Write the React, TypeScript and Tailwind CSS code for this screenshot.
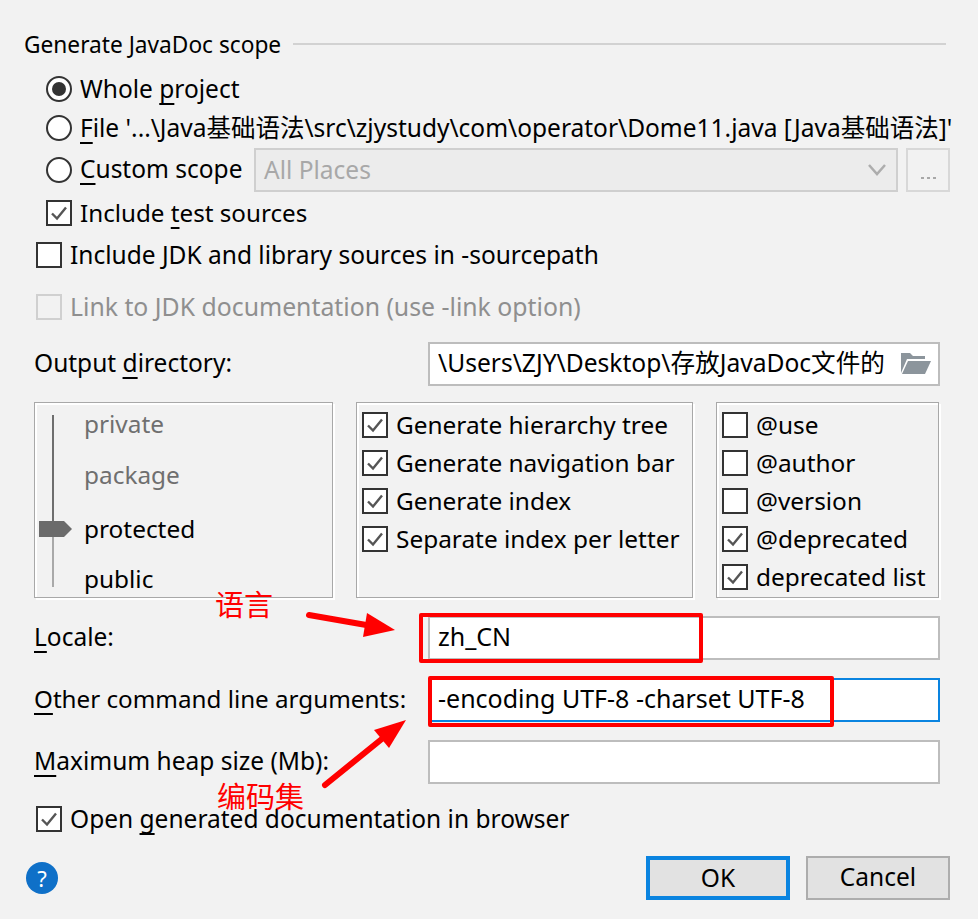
import type { ReactNode } from 'react';

const u = 'underline decoration-2 underline-offset-[5px] [text-decoration-skip-ink:none]';

function Check({ on, disabled }: { on?: boolean; disabled?: boolean }) {
	return (
		<span
			className={`flex h-[26px] w-[26px] shrink-0 items-center justify-center border-2 ${
				disabled ? 'border-[#d0d0d0] bg-[#f2f2f2]' : 'border-[#333333] bg-white'
			}`}
		>
			{on && (
				<svg width="18" height="18" viewBox="0 0 18 18" fill="none">
					<path d="M2 9.5 L7 14.5 L16 3.5" stroke="#555555" strokeWidth="2.4" />
				</svg>
			)}
		</span>
	);
}

function Radio({ on }: { on?: boolean }) {
	return (
		<span className="flex h-[26px] w-[26px] shrink-0 items-center justify-center rounded-full border-2 border-[#333333] bg-white">
			{on && <span className="h-[14px] w-[14px] rounded-full bg-[#333333]" />}
		</span>
	);
}

function Row({ h, pl, children }: { h: string; pl: string; children: ReactNode }) {
	return <div className={`flex items-center gap-[8px] ${h} ${pl}`}>{children}</div>;
}

function CheckItem({ on, label }: { on?: boolean; label: string }) {
	return (
		<div className="flex h-[38px] items-center gap-[8px]">
			<Check on={on} />
			<span className="text-[24.4px]">{label}</span>
		</div>
	);
}

function Field({ label, border, children }: { label: ReactNode; border?: string; children?: ReactNode }) {
	return (
		<div className="flex h-[44px] items-center justify-between pl-[34px] pr-[38px]">
			<span className="pb-[2px]">{label}</span>
			<div className={`flex h-[44px] w-[512px] items-center border-2 bg-white pb-[2px] pl-[8px] text-[25px] ${border ?? 'border-[#bdbdbd]'}`}>
				{children}
			</div>
		</div>
	);
}

function Slider() {
	return (
		<svg width="36" height="192" viewBox="0 0 36 192" className="shrink-0">
			<rect x="15" y="11" width="2" height="108" fill="#6e6e6e" />
			<rect x="15" y="119" width="2" height="64" fill="#a9a9a9" />
			<path d="M2 117 H27 L35 125 L27 133 H2 Z" fill="#6b6b6b" />
		</svg>
	);
}

export default function App() {
	return (
		<div
			className="relative h-[919px] w-full overflow-hidden bg-[#f2f2f2] pt-[24px] text-[24.5px] text-black"
			style={{ fontFamily: '"Noto Sans", "Noto Sans CJK SC", sans-serif' }}
		>
			<div className="flex h-[44px] items-center gap-[12px] pb-[2px] pl-[24px] pr-[32px] text-[22.7px]">
				<span>Generate JavaDoc scope</span>
				<div className="mb-[2px] h-[2px] flex-1 bg-[#d2d2d2]" />
			</div>

			<Row h="h-[42px]" pl="pl-[46px]">
				<Radio on />
				<span>Whole <span className={u}>p</span>roject</span>
			</Row>
			<Row h="h-[36px]" pl="pl-[46px]">
				<Radio />
				<span className="whitespace-nowrap">
					<span className={u}>F</span>ile '...\Java基础语法\src\zjystudy\com\operator\Dome11.java [Java基础语法]'
				</span>
			</Row>
			<Row h="h-[48px]" pl="pl-[46px]">
				<Radio />
				<span className="w-[168px] whitespace-nowrap pb-[2px]"><span className={u}>C</span>ustom scope</span>
				<div className="-ml-[2px] flex h-[44px] w-[644px] items-center justify-between border-2 border-[#cfcfcf] bg-[#ececec] pl-[8px] pr-[9px] text-[#a8a8a8]">
					<span>All Places</span>
					<svg width="20" height="14" viewBox="0 0 20 14" fill="none">
						<path d="M2 2 L10 11 L18 2" stroke="#adadad" strokeWidth="2.5" />
					</svg>
				</div>
				<div className="flex h-[44px] w-[44px] items-end justify-center border-2 border-[#d8d8d8] pb-[11px]">
					<span className="flex gap-[3px]">
						<span className="h-[2px] w-[3px] bg-[#a8a8a8]" />
						<span className="h-[2px] w-[3px] bg-[#a8a8a8]" />
						<span className="h-[2px] w-[3px] bg-[#a8a8a8]" />
					</span>
				</div>
			</Row>
			<Row h="h-[38px]" pl="pl-[46px]">
				<Check on />
				<span className="text-[24.2px]">Include <span className={u}>t</span>est sources</span>
			</Row>
			<Row h="h-[46px]" pl="pl-[36px]">
				<Check />
				<span>Include JDK and library sources in -sourcepath</span>
			</Row>
			<Row h="h-[58px]" pl="pl-[36px]">
				<Check disabled />
				<span className="text-[24.8px] text-[#8f8f8f]">Link to JDK documentation (use -link option)</span>
			</Row>

			<div className="mt-[6px]">
				<Field label={<>Output <span className={u}>d</span>irectory:</>}>
					<span className="w-[462px] overflow-hidden whitespace-nowrap text-[24.6px]">\Users\ZJY\Desktop\存放JavaDoc文件的</span>
					<svg width="32" height="24" viewBox="0 0 32 24" className="shrink-0">
						<path d="M1 22 V2 H10 L13 5 H25 V8 H7 L1 22 Z" fill="#8c959c" />
						<path d="M8 10 H31 L25 23 H2 Z" fill="#8c959c" />
					</svg>
				</Field>
			</div>

			<div className="mt-[16px] flex h-[196px] items-start pl-[34px]">
				<div className="flex h-[196px] w-[299px] border border-[#a8a8a8] pl-[2px] pt-[1px] shadow-[inset_2px_2px_0_white,2px_2px_0_white]">
					<Slider />
					<div className="ml-[11px] text-[24.4px]">
						<div className="h-[53px] pt-[2px] text-[#6f6f6f]">private</div>
						<div className="h-[54px] text-[#6f6f6f]">package</div>
						<div className="h-[50px]">protected</div>
						<div>public</div>
					</div>
				</div>
				<div className="ml-[23px] h-[196px] w-[337px] border border-[#a8a8a8] pl-[5px] pt-[3px] shadow-[inset_2px_2px_0_white,2px_2px_0_white]">
					<CheckItem on label="Generate hierarchy tree" />
					<CheckItem on label="Generate navigation bar" />
					<CheckItem on label="Generate index" />
					<CheckItem on label="Separate index per letter" />
				</div>
				<div className="ml-[23px] h-[196px] w-[223px] border border-[#a8a8a8] pl-[5px] pt-[3px] shadow-[inset_2px_2px_0_white,2px_2px_0_white]">
					<CheckItem label="@use" />
					<CheckItem label="@author" />
					<CheckItem label="@version" />
					<CheckItem on label="@deprecated" />
					<CheckItem on label="deprecated list" />
				</div>
			</div>

			<div className="mt-[18px] flex flex-col gap-[18px]">
				<Field label={<><span className={u}>L</span>ocale:</>}>
					<span>zh_CN</span>
				</Field>
				<Field label={<span className="text-[24.2px]"><span className={u}>O</span>ther command line arguments:</span>} border="border-[#0a84e0]">
					<span>-encoding UTF-8 -charset UTF-8</span>
				</Field>
				<Field label={<><span className={u}>M</span>aximum heap size (Mb):</>} />
			</div>

			<Row h="h-[70px]" pl="pl-[36px]">
				<Check on />
				<span>Open <span className={u}>g</span>enerated documentation in browser</span>
			</Row>

			<div className="mt-[2px] flex h-[44px] items-center pl-[26px] pr-[28px]">
				<span className="flex h-[32px] w-[32px] items-center justify-center rounded-full bg-[#0f70c8] text-[22px] text-white">?</span>
				<button className="ml-auto h-[44px] w-[144px] border-[4px] border-[#0a84e0] bg-[#e2e2e2] pb-[3px]">OK</button>
				<button className="ml-[16px] h-[44px] w-[144px] border-2 border-[#adadad] bg-[#e2e2e2] pb-[2px]">Cancel</button>
			</div>

			{/* red annotations drawn over the dialog */}
			<div className="absolute left-[419px] top-[613px] h-[50px] w-[284px] rounded-[2px] border-[4px] border-[#ff0000]" />
			<div className="absolute left-[428px] top-[676px] h-[51px] w-[406px] rounded-[2px] border-[4px] border-[#ff0000]" />
			<span className="absolute left-[215px] top-[585px] text-[29px] leading-[40px] text-[#ff0000]">语言</span>
			<span className="absolute left-[217px] top-[777px] text-[29px] leading-[40px] text-[#ff0000]">编码集</span>
			<svg width="978" height="919" viewBox="0 0 978 919" className="pointer-events-none absolute left-0 top-0">
				<path d="M309 615 L372 626" stroke="#ff0000" strokeWidth="6" strokeLinecap="round" />
				<path d="M395 630 L367 613 L363 637 Z" fill="#ff0000" />
				<path d="M325 785 L383 738" stroke="#ff0000" strokeWidth="6" strokeLinecap="round" />
				<path d="M406 720 L374 730 L389 748 Z" fill="#ff0000" />
			</svg>
		</div>
	);
}
